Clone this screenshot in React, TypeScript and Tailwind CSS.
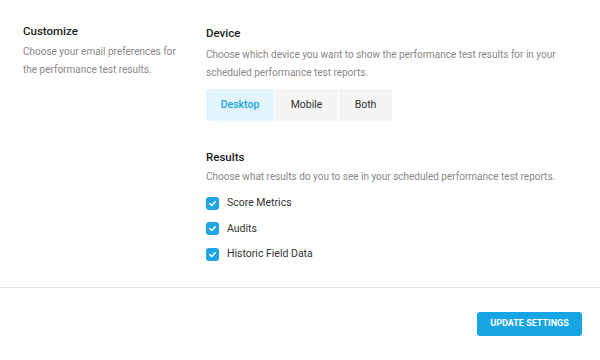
import React from "react";

function Check() {
  return (
    <span className="flex h-[13px] w-[13px] shrink-0 items-center justify-center rounded-[3px] bg-[#1ca6e3]">
      <svg width="9" height="9" viewBox="0 0 10 10" fill="none">
        <path d="M2 5.2 L4.2 7.2 L8 3" stroke="white" strokeWidth="1.7" strokeLinecap="round" strokeLinejoin="round" />
      </svg>
    </span>
  );
}

export default function App() {
  const items = ["Score Metrics", "Audits", "Historic Field Data"];
  return (
    <div className="flex h-[360px] w-[600px] flex-col bg-white" style={{ fontFamily: "Roboto, 'Liberation Sans', sans-serif" }}>
      <div className="flex h-[287px] pl-[23px] pt-[21px]">
        <div className="w-[183px] shrink-0">
          <div className="text-[11.5px] font-medium leading-[20px] text-[#222]">Customize</div>
          <div className="mt-[2px] whitespace-nowrap text-[10px] leading-[18px] text-[#888]">
            Choose your email preferences for
            <br />
            the performance test results.
          </div>
        </div>
        <div className="pt-[2px]">
          <div className="text-[11.5px] font-medium leading-[20px] text-[#222]">Device</div>
          <div className="mt-[3px] whitespace-nowrap text-[10px] leading-[18px] text-[#888]">
            Choose which device you want to show the performance test results for in your
            <br />
            scheduled performance test reports.
          </div>
          <div className="mt-[7px] flex h-[32px] w-[186px] gap-px overflow-hidden rounded-[3px] text-[10.5px]">
            <div className="flex w-[68px] items-center justify-center bg-[#e2f4fd] font-medium text-[#1ba4e0]">Desktop</div>
            <div className="flex w-[63px] items-center justify-center bg-[#f5f5f5] text-[#333]">Mobile</div>
            <div className="flex flex-1 items-center justify-center bg-[#f5f5f5] text-[#333]">Both</div>
          </div>
          <div className="mt-[26px] text-[11.5px] font-medium leading-[20px] text-[#222]">Results</div>
          <div className="mt-[1px] whitespace-nowrap text-[10px] leading-[18px] text-[#888]">
            Choose what results do you to see in your scheduled performance test reports.
          </div>
          <div className="mt-[7px] flex flex-col gap-[5.5px]">
            {items.map((t) => (
              <div key={t} className="flex h-[20px] items-center gap-[8px]">
                <Check />
                <span className="text-[10.5px] text-[#333]">{t}</span>
              </div>
            ))}
          </div>
        </div>
      </div>
      <div className="flex flex-1 justify-end border-t border-[#e8e8e8] pr-[18px] pt-[24px]">
        <button className="h-[24px] w-[105px] rounded-[3px] bg-[#17a6e3] text-[9px] font-bold text-white">
          UPDATE SETTINGS
        </button>
      </div>
    </div>
  );
}
